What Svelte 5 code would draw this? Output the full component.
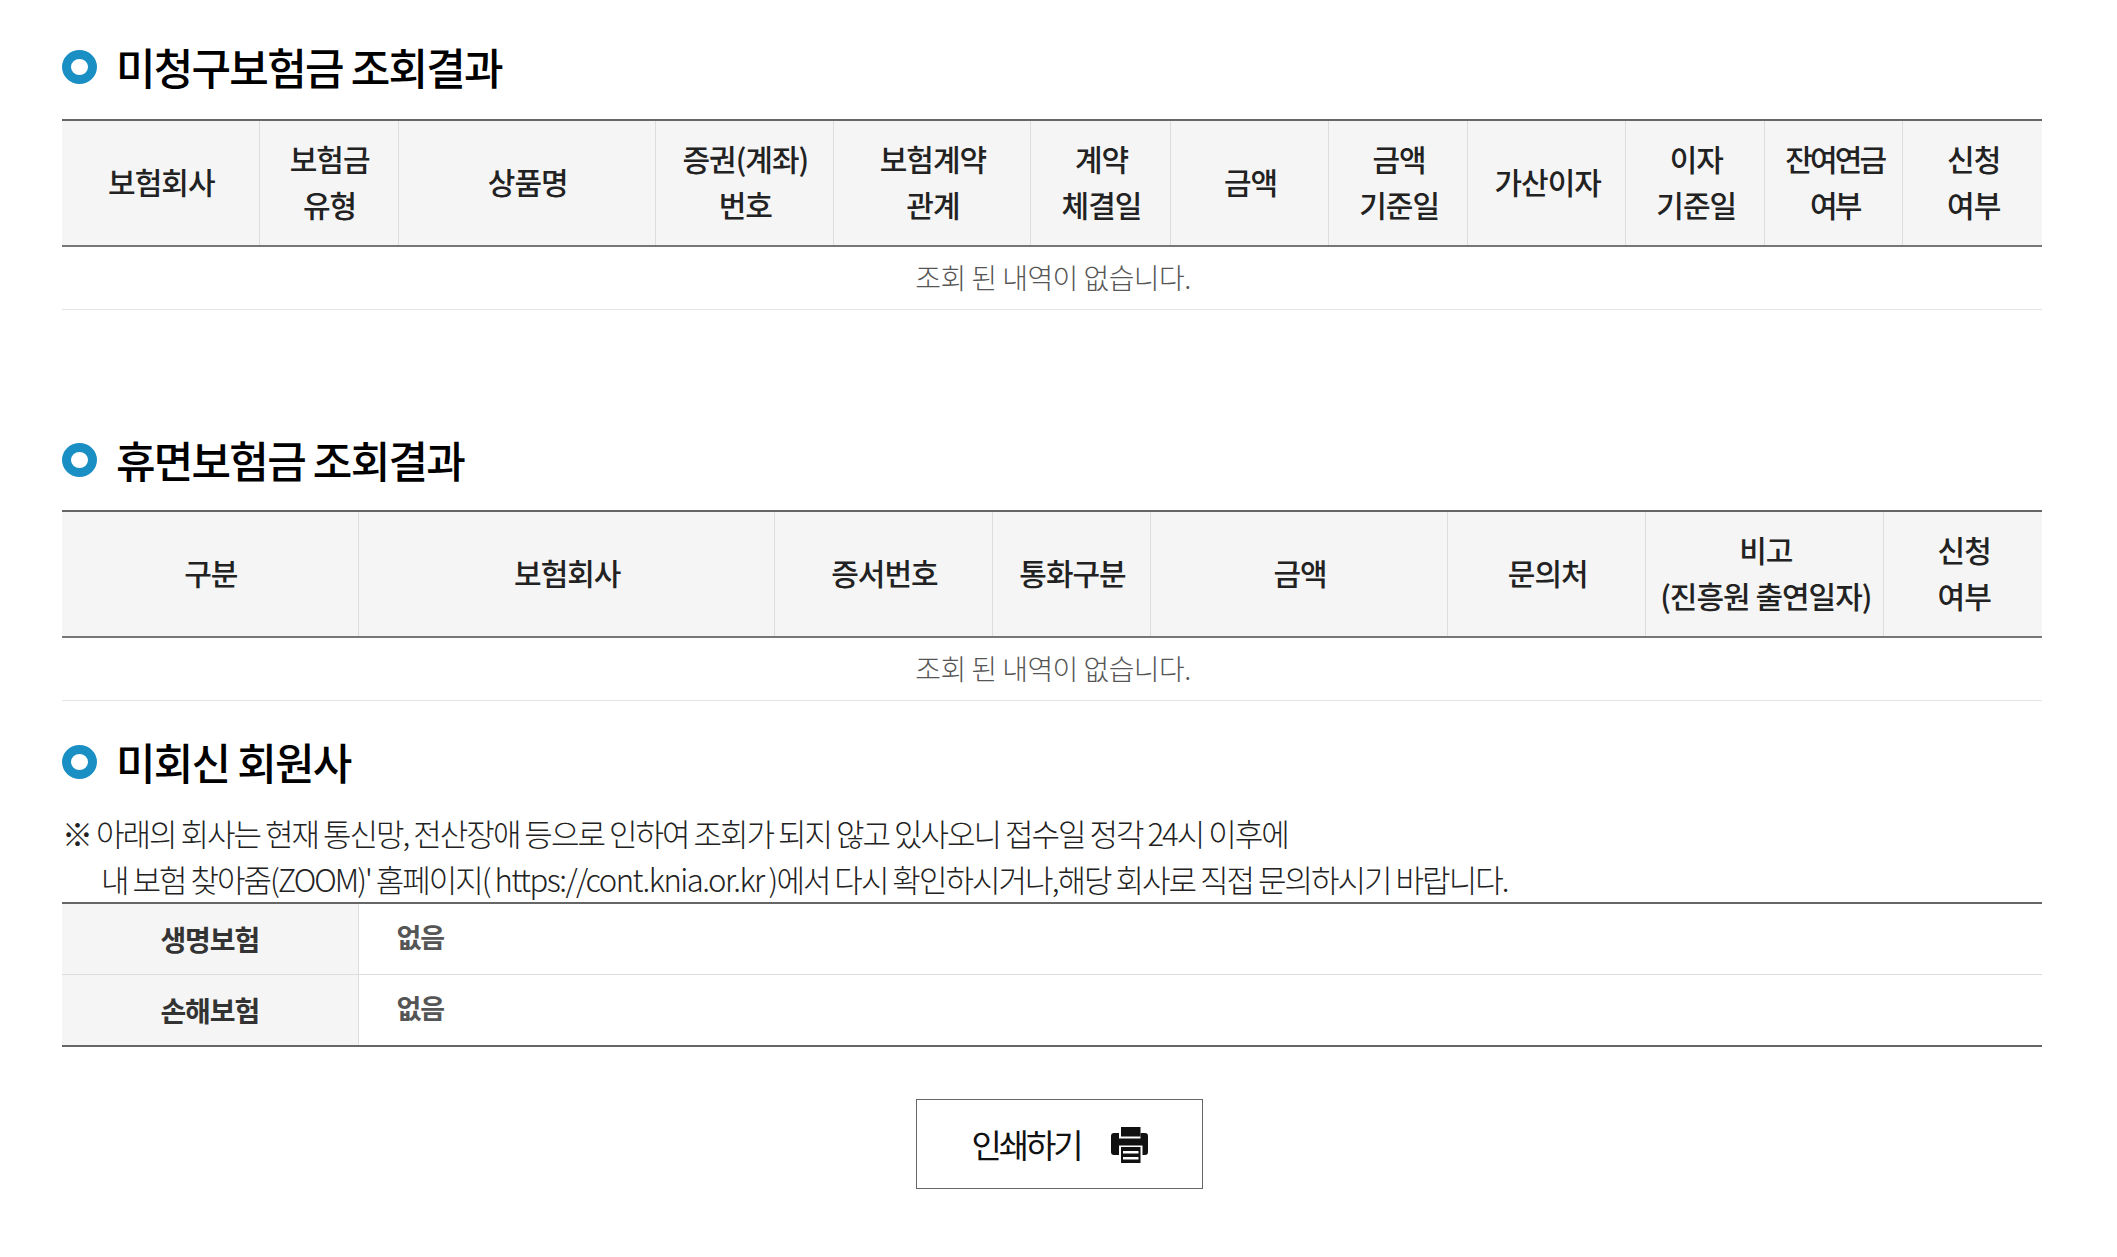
<script>
  const EMPTY = '조회 된 내역이 없습니다.';
  const unclaimed = [
    { w: 197, label: ['보험회사'] },
    { w: 139, label: ['보험금', '유형'] },
    { w: 257, label: ['상품명'] },
    { w: 178, label: ['증권(계좌)', '번호'] },
    { w: 197, label: ['보험계약', '관계'] },
    { w: 140, label: ['계약', '체결일'] },
    { w: 158, label: ['금액'] },
    { w: 139, label: ['금액', '기준일'] },
    { w: 158, label: ['가산이자'] },
    { w: 139, label: ['이자', '기준일'] },
    { w: 138, label: ['잔여연금', '여부'], tight: true },
    { w: 139, label: ['신청', '여부'] },
  ];
  const dormant = [
    { w: 296, label: ['구분'] },
    { w: 416, label: ['보험회사'] },
    { w: 218, label: ['증서번호'] },
    { w: 158, label: ['통화구분'] },
    { w: 297, label: ['금액'] },
    { w: 198, label: ['문의처'] },
    { w: 238, label: ['비고', '(진흥원 출연일자)'] },
    { w: 158, label: ['신청', '여부'] },
  ];
  const members = [
    { name: '생명보험', value: '없음' },
    { name: '손해보험', value: '없음' },
  ];
</script>

{#snippet resultTable(cols)}
  <table class="grid">
    <colgroup>
      {#each cols as c}<col style="width: {c.w}px" />{/each}
    </colgroup>
    <thead>
      <tr>
        {#each cols as c}
          <th class:tight={c.tight}><span class="cap">{#each c.label as line, i}{#if i > 0}<br />{/if}{line}{/each}</span></th>
        {/each}
      </tr>
    </thead>
    <tbody>
      <tr><td class="empty" colspan={cols.length}>{EMPTY}</td></tr>
    </tbody>
  </table>
{/snippet}

<div class="page">
  <h2 class="title first">미청구보험금 조회결과</h2>
  {@render resultTable(unclaimed)}

  <h2 class="title second">휴면보험금 조회결과</h2>
  {@render resultTable(dormant)}

  <h2 class="title third">미회신 회원사</h2>
  <p class="note">
    <span>※ 아래의 회사는 현재 통신망, 전산장애 등으로 인하여 조회가 되지 않고 있사오니 접수일 정각 24시 이후에</span>
    <span class="indent">내 보험 찾아줌(ZOOM)' 홈페이지( <span class="url">https://cont.knia.or.kr</span> )에서 다시 확인하시거나,해당 회사로 직접 문의하시기 바랍니다.</span>
  </p>
  <table class="members">
    <colgroup><col style="width: 296px" /><col /></colgroup>
    <tbody>
      {#each members as m}
        <tr><th>{m.name}</th><td>{m.value}</td></tr>
      {/each}
    </tbody>
  </table>

  <div class="actions">
    <button class="print" type="button">
      인쇄하기
      <svg width="37" height="37" viewBox="0 0 37 37" aria-hidden="true">
        <path d="M10 1h19.500v9.500H10z" fill="#111" />
        <path d="M3 7h5v5.500h21.500V7H34a3 3 0 0 1 3 3v16a3 3 0 0 1-3 3h-2.500V19.500H8V29H3a3 3 0 0 1-3-3V10a3 3 0 0 1 3-3z" fill="#111" />
        <path d="M10 21h19.500v16H10z" fill="#111" />
        <path d="M12 25h15.500v2.500H12zM12 31h15.500v2.500H12z" fill="#fff" />
      </svg>
    </button>
  </div>
</div>

<style>
  :global(body) {
    margin: 0;
    background: #fff;
  }

  .page {
    width: 1980px;
    margin-left: 62px;
    padding-top: 41px;
    font-family: "Noto Sans CJK KR", "Noto Sans", sans-serif;
    color: #333;
  }

  .title {
    position: relative;
    margin: 0;
    padding-left: 54px;
    font-size: 43px;
    line-height: 50px;
    font-weight: 500;
    letter-spacing: -1.77px;
    color: #000;
  }

  .title::before {
    content: "";
    position: absolute;
    left: 0;
    top: 9px;
    width: 17px;
    height: 16px;
    border: 9px solid #1a8fc4;
    border-radius: 50%;
    background: #fff;
  }

  .first { margin-bottom: 28px; }
  .second { margin-top: 124px; margin-bottom: 26px; }
  .third { margin-top: 35px; margin-bottom: 24px; }

  table {
    width: 100%;
    border-collapse: collapse;
    table-layout: fixed;
  }

  .grid thead tr {
    border-top: 2px solid #666;
    border-bottom: 2px solid #777;
  }

  .grid th {
    height: 124px;
    padding: 0;
    background: #f5f5f5;
    border-left: 1px solid #ddd;
    font-size: 30px;
    line-height: 46px;
    font-weight: 500;
    letter-spacing: -1px;
    text-align: center;
    color: #222;
  }

  .grid th:first-child { border-left: 0; }
  .grid th.tight { letter-spacing: -2.8px; }

  .cap {
    display: block;
    margin-top: -5px;
    padding-left: 2px;
  }

  .empty {
    height: 60px;
    padding: 0 0 2px 2px;
    border-bottom: 1px solid #e4e4e4;
    font-size: 28px;
    font-weight: 300;
    letter-spacing: -0.55px;
    text-align: center;
    color: #555;
  }

  .note {
    display: flex;
    flex-direction: column;
    margin: 0;
    font-size: 31px;
    line-height: 46px;
    font-weight: 300;
    letter-spacing: -1.97px;
    color: #222;
  }

  .indent { padding-left: 39px; }
  .url { letter-spacing: -1.5px; }

  .members {
    border-top: 2px solid #666;
    border-bottom: 2px solid #666;
  }

  .members tr + tr { border-top: 1px solid #ddd; }

  .members th {
    height: 69px;
    padding: 0 0 1px;
    background: #f5f5f5;
    border-right: 1px solid #ddd;
    font-size: 28px;
    font-weight: 700;
    letter-spacing: -1.1px;
    color: #333;
  }

  .members td {
    padding: 0 0 5px 38px;
    font-size: 27px;
    font-weight: 700;
    letter-spacing: -1px;
    color: #555;
  }

  .actions {
    display: flex;
    justify-content: center;
    padding: 52px 0 0 15px;
  }

  .print {
    display: flex;
    align-items: center;
    justify-content: center;
    gap: 30px;
    width: 287px;
    height: 90px;
    padding: 0;
    background: #fff;
    border: 1px solid #666;
    font-family: inherit;
    font-size: 33px;
    font-weight: 400;
    letter-spacing: -3.1px;
    color: #111;
  }
</style>
